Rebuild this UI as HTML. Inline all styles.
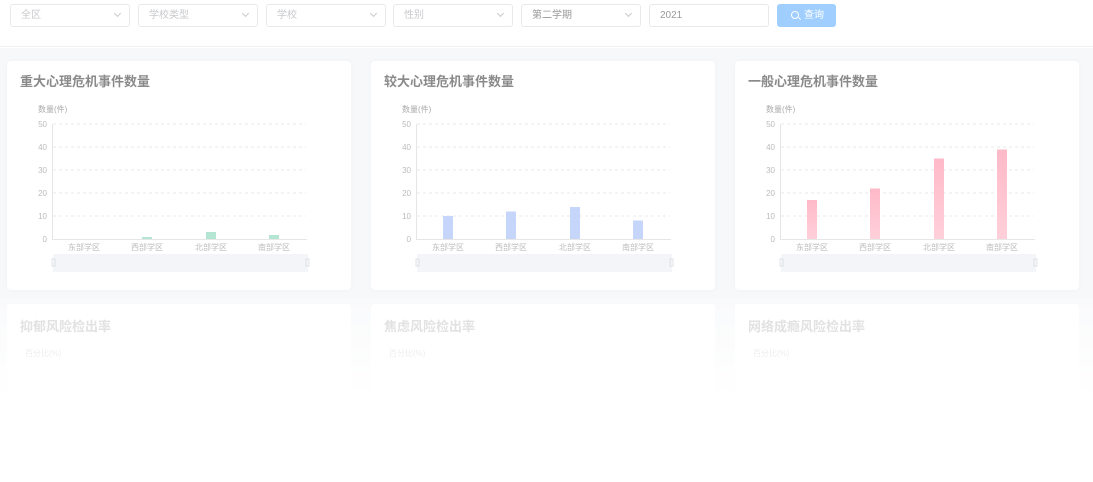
<!DOCTYPE html>
<html><head><meta charset="utf-8"><style>
*{margin:0;padding:0;box-sizing:border-box}
body{width:1093px;height:482px;overflow:hidden;background:#fff;font-family:"Liberation Sans","Noto Sans CJK SC",sans-serif;position:relative}
.top{position:absolute;left:0;top:0;width:1093px;height:47px;background:#fff;border-bottom:1px solid #eef0f3}
.bg{position:absolute;left:0;top:48px;width:1093px;height:250px;background:#f7f8fa}
.bg2{position:absolute;left:0;top:298px;width:1093px;height:100px;background:linear-gradient(#f9fafb,#fff)}
.sel{position:absolute;top:4px;height:23px;width:120px;border:1px solid #e8e9ec;border-radius:3px;font-size:10px;line-height:21px;color:#c8c9cc;padding:0 10px;background:#fff}
.sel i{position:absolute;right:9px;top:6px;width:5px;height:5px;border-right:1px solid #c8c9cc;border-bottom:1px solid #c8c9cc;transform:rotate(45deg)}
.btn{position:absolute;left:777px;top:4px;width:59px;height:23px;background:#a0cfff;border-radius:3px;color:#fff;font-size:10px;line-height:23px;padding-left:27px}
.card{position:absolute;top:61px;width:344px;height:229px;background:#fff;border-radius:4px;box-shadow:0 0 6px rgba(0,0,0,.03)}
.card2{position:absolute;top:304px;width:344px;height:95px;background:#fff;border-radius:4px}
h3{position:absolute;left:13px;top:10px;font-size:13px;font-weight:bold;color:#8a8a8a}
.card2 h3{color:#e2e2e2;top:12px}
svg{position:absolute;left:0;top:0}
</style></head><body>
<div class="top"></div><div class="bg"></div><div class="bg2"></div>
<div class="sel" style="left:10px">全区<i></i></div>
<div class="sel" style="left:138px">学校类型<i></i></div>
<div class="sel" style="left:266px">学校<i></i></div>
<div class="sel" style="left:393px">性别<i></i></div>
<div class="sel" style="left:521px;color:#999">第二学期<i></i></div>
<div class="sel" style="left:649px;color:#999">2021</div>
<div class="btn"><span style="position:absolute;left:14px;top:7px;width:8px;height:8px;border:1.3px solid #fff;border-radius:50%"></span><span style="position:absolute;left:21px;top:14px;width:3px;height:1.3px;background:#fff;transform:rotate(45deg)"></span>查询</div>

<div class="card" style="left:7px"><h3>重大心理危机事件数量</h3></div>
<div class="card" style="left:371px"><h3>较大心理危机事件数量</h3></div>
<div class="card" style="left:735px"><h3>一般心理危机事件数量</h3></div>
<div class="card2" style="left:7px"><h3>抑郁风险检出率</h3><div style="position:absolute;left:18px;top:44px;font-size:8px;color:#eee">百分比(%)</div></div>
<div class="card2" style="left:371px"><h3>焦虑风险检出率</h3><div style="position:absolute;left:18px;top:44px;font-size:8px;color:#eee">百分比(%)</div></div>
<div class="card2" style="left:735px"><h3>网络成瘾风险检出率</h3><div style="position:absolute;left:18px;top:44px;font-size:8px;color:#eee">百分比(%)</div></div>

<svg width="1093" height="482" font-family="Liberation Sans,Noto Sans CJK SC,sans-serif">
<defs>
<linearGradient id="g" x1="0" y1="0" x2="0" y2="1"><stop offset="0" stop-color="#ffb9c8"/><stop offset="1" stop-color="#ffd0da"/></linearGradient>
</defs>
<g id="c1">
<text x="38" y="112" font-size="8" fill="#aaa">数量(件)</text>
<g font-size="8" fill="#bbb" text-anchor="end">
<text x="47" y="127">50</text><text x="47" y="150">40</text><text x="47" y="173">30</text><text x="47" y="196">20</text><text x="47" y="219">10</text><text x="47" y="242">0</text></g>
<g stroke="#e8e8e8" stroke-dasharray="3,3"><line x1="53" y1="124" x2="306" y2="124"/><line x1="53" y1="147" x2="306" y2="147"/><line x1="53" y1="170" x2="306" y2="170"/><line x1="53" y1="193" x2="306" y2="193"/><line x1="53" y1="216" x2="306" y2="216"/></g>
<line x1="52.5" y1="124" x2="52.5" y2="239" stroke="#e6e6e6"/>
<line x1="52" y1="239.5" x2="307" y2="239.5" stroke="#e6e6e6"/>
<g font-size="8" fill="#bbb" text-anchor="middle"><text x="84" y="250">东部学区</text><text x="147" y="250">西部学区</text><text x="211" y="250">北部学区</text><text x="274" y="250">南部学区</text></g>
<rect x="53" y="254" width="255" height="18" fill="#f4f5f8"/>
<rect x="52" y="259" width="3" height="7" fill="none" stroke="#d8dbe2" stroke-width="0.8"/>
<rect x="306" y="259" width="3" height="7" fill="none" stroke="#d8dbe2" stroke-width="0.8"/>
</g>
<use href="#c1" x="364"/><use href="#c1" x="728"/>
<g fill="#b5e6d3"><rect x="142" y="237" width="10" height="2"/><rect x="206" y="232" width="10" height="7"/><rect x="269" y="235" width="10" height="4"/></g>
<g fill="#c6d6fb"><rect x="443" y="216" width="10" height="23"/><rect x="506" y="211.5" width="10" height="27.5"/><rect x="570" y="207" width="10" height="32"/><rect x="633" y="220.5" width="10" height="18.5"/></g>
<g fill="url(#g)"><rect x="807" y="200" width="10" height="39"/><rect x="870" y="188.5" width="10" height="50.5"/><rect x="934" y="158.5" width="10" height="80.5"/><rect x="997" y="149.5" width="10" height="89.5"/></g>
</svg>
</body></html>
